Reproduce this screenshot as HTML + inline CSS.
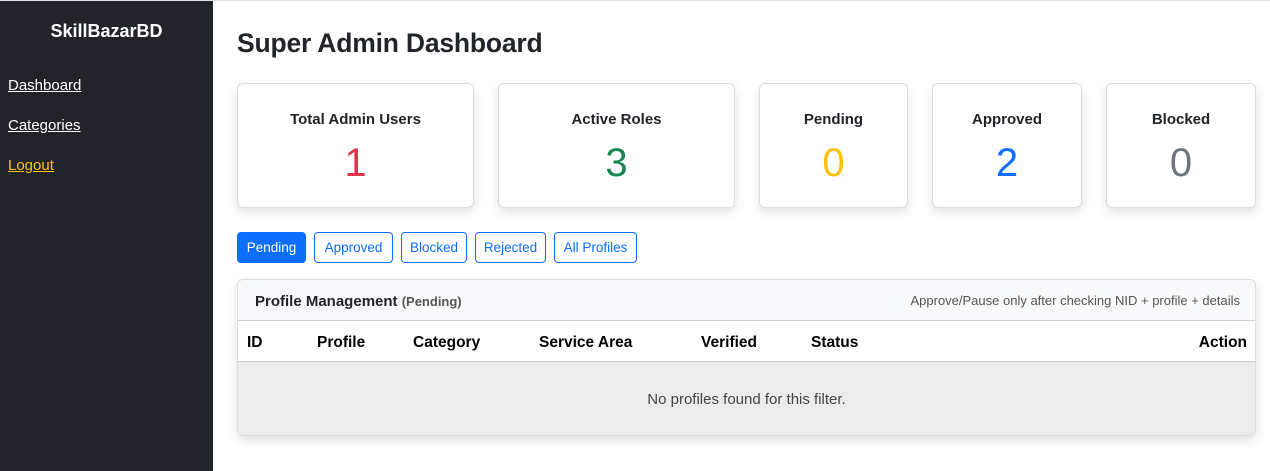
<!DOCTYPE html>
<html><head><meta charset="utf-8"><style>
*{box-sizing:border-box;margin:0;padding:0}
body{width:1270px;height:471px;overflow:hidden;background:#fff;font-family:"Liberation Sans",sans-serif;color:#212529;position:relative}
.topl{position:absolute;left:0;top:0;width:1270px;height:1px;background:#dee2e6}
.sb{position:absolute;left:0;top:1px;width:213px;height:470px;background:#212529}
.brand{position:absolute;left:0;width:213px;top:20px;text-align:center;color:#fff;font-weight:bold;font-size:18px}
.sb a{position:absolute;left:8px;color:#fff;font-size:15px;text-decoration:underline}
h1{position:absolute;left:237px;top:28px;font-size:26.5px;font-weight:bold;letter-spacing:-.2px}
.card{position:absolute;top:83px;height:125px;border:1px solid #dcdcdc;border-radius:6px;box-shadow:0 4px 10px rgba(0,0,0,.12);text-align:center}
.card .t{position:absolute;top:27px;width:100%;font-size:15px;font-weight:bold}
.card .n{position:absolute;top:56px;width:100%;font-size:40px;line-height:46px}
.btn{position:absolute;top:232px;height:31px;border:1px solid #0d6efd;border-radius:4px;color:#0d6efd;font-size:13.5px;line-height:30px;text-align:center}
.tc{position:absolute;left:237px;top:279px;width:1019px;height:157px;border:1px solid #dcdcdc;border-radius:6px;box-shadow:0 4px 10px rgba(0,0,0,.12);overflow:hidden}
.hd{height:41px;background:#f8f9fa;border-bottom:1px solid #d0d0d0;position:relative}
.th{height:41px;border-bottom:1px solid #ccc;position:relative;background:#fff}
.th span{position:absolute;top:13px;font-weight:bold;font-size:15.5px;color:#000}
.bd{height:73px;background:#ececec;text-align:center;line-height:75px;font-size:15px;color:#444}
</style></head><body>
<div class="topl"></div>
<div class="sb">
<div class="brand">SkillBazarBD</div>
<a style="top:76px">Dashboard</a>
<a style="top:116px">Categories</a>
<a style="top:156px;color:#ffc107">Logout</a>
</div>
<h1>Super Admin Dashboard</h1>
<div class="card" style="left:237px;width:237px"><div class="t">Total Admin Users</div><div class="n" style="color:#dc3545">1</div></div>
<div class="card" style="left:498px;width:237px"><div class="t">Active Roles</div><div class="n" style="color:#198754">3</div></div>
<div class="card" style="left:759px;width:149px"><div class="t">Pending</div><div class="n" style="color:#ffc107">0</div></div>
<div class="card" style="left:932px;width:150px"><div class="t">Approved</div><div class="n" style="color:#0d6efd">2</div></div>
<div class="card" style="left:1106px;width:150px"><div class="t">Blocked</div><div class="n" style="color:#6c757d">0</div></div>
<div class="btn" style="left:237px;width:69px;background:#0d6efd;color:#fff">Pending</div>
<div class="btn" style="left:314px;width:79px">Approved</div>
<div class="btn" style="left:401px;width:66px">Blocked</div>
<div class="btn" style="left:475px;width:71px">Rejected</div>
<div class="btn" style="left:554px;width:83px">All Profiles</div>
<div class="tc">
<div class="hd"><span style="position:absolute;left:17px;top:13px;font-weight:bold;font-size:15px">Profile Management <span style="font-size:13px;color:#555">(Pending)</span></span><span style="position:absolute;right:15px;top:13px;font-size:13px;color:#555">Approve/Pause only after checking NID + profile + details</span></div>
<div class="th"><span style="left:9px">ID</span><span style="left:79px">Profile</span><span style="left:175px">Category</span><span style="left:301px">Service Area</span><span style="left:463px">Verified</span><span style="left:573px">Status</span><span style="right:8px">Action</span></div>
<div class="bd">No profiles found for this filter.</div>
</div>
</body></html>
